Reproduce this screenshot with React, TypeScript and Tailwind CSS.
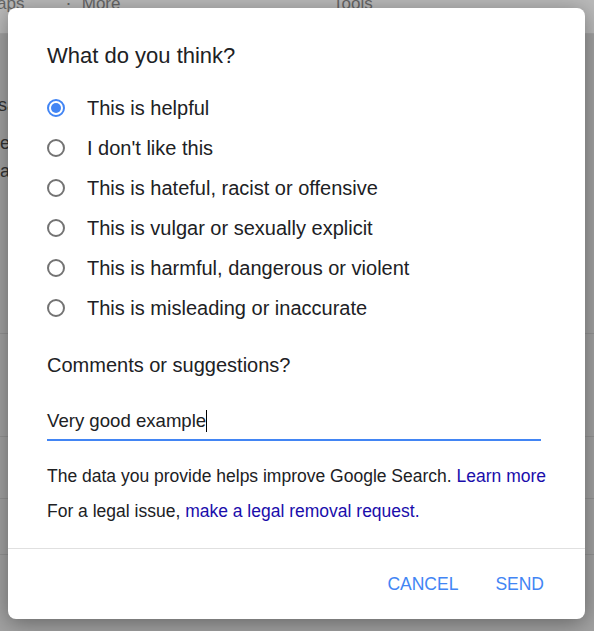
import { useState } from 'react'

const OPTIONS = [
  'This is helpful',
  "I don't like this",
  'This is hateful, racist or offensive',
  'This is vulgar or sexually explicit',
  'This is harmful, dangerous or violent',
  'This is misleading or inaccurate',
]

function Radio({ checked }: { checked: boolean }) {
  return checked ? (
    <span className="w-[18px] h-[18px] rounded-full border-2 border-[#4285f4] flex items-center justify-center shrink-0">
      <span className="w-[10px] h-[10px] rounded-full bg-[#4285f4]" />
    </span>
  ) : (
    <span className="w-[18px] h-[18px] rounded-full border-2 border-[#737373] shrink-0" />
  )
}

export default function App() {
  const [choice, setChoice] = useState(0)

  return (
    <div className="relative h-[631px] overflow-hidden bg-[#a2a2a2] font-['Liberation_Sans',Arial,sans-serif]">
      {/* dimmed page behind the dialog */}
      <div className="h-[34px] bg-[#bababa] border-b border-[#a6a6a6] flex text-[17px] leading-none text-[#666]">
        <span className="-mt-[5px] -ml-[3px] w-[63px]">aps</span>
        <span className="-mt-[5px] w-[273px]">⋮ More</span>
        <span className="-mt-[5px]">Tools</span>
      </div>
      <div className="text-[18px] text-[#333] -ml-[2px]">
        <div className="mt-[60px] leading-[22px]">sample</div>
        <div className="mt-[16px] leading-[22px] ml-[2px]">ex</div>
        <div className="mt-[6px] leading-[22px] ml-[2px]">an</div>
      </div>
      <div className="mt-[151px] border-t border-[#939393]" />
      <div className="mt-[102px] border-t border-[#939393]" />
      <div className="mt-[61px] border-t border-[#939393]" />
      <div className="mt-[55px] border-t border-[#939393]" />

      {/* dialog */}
      <div className="absolute left-[8px] top-[8px] w-[577px] h-[611px] bg-white rounded-[8px] shadow-[0_4px_22px_rgba(0,0,0,0.38)] flex flex-col text-[#202124]">
        <div className="flex-1 pl-[39px] pr-[44px] pt-[34px]">
          <h2 className="text-[22px] leading-[28px]">What do you think?</h2>
          <div className="mt-[18px]">
            {OPTIONS.map((o, i) => (
              <label key={o} className="h-[40px] flex items-center cursor-pointer" onClick={() => setChoice(i)}>
                <Radio checked={choice === i} />
                <span className="ml-[22px] text-[20px] leading-[28px]">{o}</span>
              </label>
            ))}
          </div>
          <p className="mt-[23px] text-[20px] leading-[28px]">Comments or suggestions?</p>
          <div className="mt-[29px] pb-[5px] border-b-2 border-[#4285f4] flex items-center text-[18.6px] leading-[26px]">
            Very good example
            <span className="w-px h-[22px] bg-black" />
          </div>
          <p className="mt-[23px] text-[17.5px] leading-[24px] whitespace-nowrap">
            The data you provide helps improve Google Search. <a className="text-[#1a0dab]">Learn more</a>
          </p>
          <p className="mt-[11px] text-[17.5px] leading-[24px]">
            For a legal issue, <a className="text-[#1a0dab]">make a legal removal request.</a>
          </p>
        </div>
        <div className="h-[71px] border-t border-[#e0e0e0] flex items-center justify-end gap-[37px] pr-[41px] text-[17.5px] leading-[20px] text-[#4285f4]">
          <button>CANCEL</button>
          <button>SEND</button>
        </div>
      </div>
    </div>
  )
}
